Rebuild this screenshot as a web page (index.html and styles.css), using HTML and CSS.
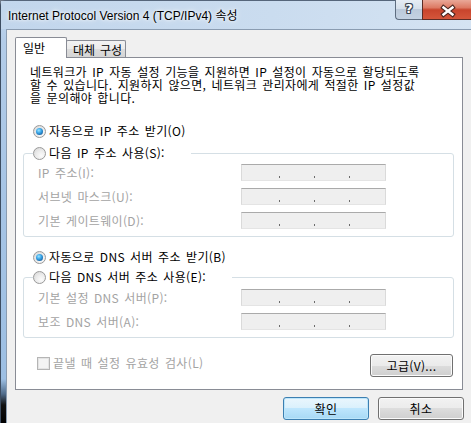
FILE: index.html
```html
<!DOCTYPE html>
<html lang="ko">
<head>
<meta charset="utf-8">
<title>Internet Protocol Version 4 (TCP/IPv4) 속성</title>
<link rel="stylesheet" href="styles.css">
</head>
<body>
<div class="window">
  <div class="titlebar">
    <span class="title">Internet Protocol Version 4 (TCP/IPv4) 속성</span>
    <div class="caption-buttons">
      <div class="cap help"><span class="help-glyph">?</span></div>
      <div class="cap close">
        <svg width="50" height="20" viewBox="0 0 50 20">
          <path d="M20.5 7.5 L29.5 14.5 M29.5 7.5 L20.5 14.5" stroke="#4a2620" stroke-width="4.6" stroke-linecap="square" fill="none"/>
          <path d="M20.5 7.5 L29.5 14.5 M29.5 7.5 L20.5 14.5" stroke="#ffffff" stroke-width="2.4" stroke-linecap="square" fill="none"/>
        </svg>
      </div>
    </div>
  </div>
  <div class="client">
    <div class="tabs">
      <div class="tab active">일반</div>
      <div class="tab">대체 구성</div>
    </div>
    <div class="panel">
      <p class="intro"><span>네트워크가 IP 자동 설정 기능을 지원하면 IP 설정이 자동으로 할당되도록</span><span>할 수 있습니다. 지원하지 않으면, 네트워크 관리자에게 적절한 IP 설정값</span><span>을 문의해야 합니다.</span></p>

      <div class="radio-row first"><span class="radio checked"></span><span>자동으로 IP 주소 받기(O)</span></div>

      <fieldset class="group g-ip">
        <legend><span class="legend-row"><span class="radio"></span><span>다음 IP 주소 사용(S):</span></span></legend>
        <div class="fields">
          <span class="flabel">IP 주소(I):</span>
          <span class="ipbox"><i></i><i></i><i></i></span>
          <span class="flabel">서브넷 마스크(U):</span>
          <span class="ipbox"><i></i><i></i><i></i></span>
          <span class="flabel">기본 게이트웨이(D):</span>
          <span class="ipbox"><i></i><i></i><i></i></span>
        </div>
      </fieldset>

      <div class="radio-row dns"><span class="radio checked"></span><span>자동으로 DNS 서버 주소 받기(B)</span></div>

      <fieldset class="group g-dns">
        <legend><span class="legend-row"><span class="radio"></span><span>다음 DNS 서버 주소 사용(E):</span></span></legend>
        <div class="fields">
          <span class="flabel">기본 설정 DNS 서버(P):</span>
          <span class="ipbox"><i></i><i></i><i></i></span>
          <span class="flabel">보조 DNS 서버(A):</span>
          <span class="ipbox"><i></i><i></i><i></i></span>
        </div>
      </fieldset>

      <div class="bottom-row">
        <div class="check"><span class="checkbox"></span><span>끝낼 때 설정 유효성 검사(L)</span></div>
        <div class="btn advanced">고급(V)...</div>
      </div>
    </div>
    <div class="dialog-buttons">
      <div class="btn default">확인</div>
      <div class="btn">취소</div>
    </div>
  </div>
</div>
</body>
</html>
```

FILE: styles.css
```css
* { box-sizing: border-box; }

html, body {
  margin: 0;
  padding: 0;
  width: 471px;
  height: 423px;
  overflow: hidden;
}

body {
  background: #6e7888;
  font-family: "Noto Sans CJK KR", "Noto Sans", sans-serif;
  font-size: 12px;
  color: #000;
}

.window {
  width: 496px;
  height: 423px;
  display: flex;
  flex-direction: column;
  border-left: 1px solid #3d4d61;
  border-top: 1px solid #56667b;
  border-top-left-radius: 6px;
  background: linear-gradient(to bottom, #c4d8ee 0px, #b3cce8 40px, #a6c4e5 200px, #9dbfe3 378px, #4f6b8a 393px, #121212 404px, #000 423px);
}

/* ---------- title bar ---------- */
.titlebar {
  height: 28px;
  flex: none;
  display: flex;
  align-items: flex-start;
  background: linear-gradient(to right, #c2d6ec 0%, #cadcef 55%, #d6e4f3 100%);
}

.title {
  font-family: "Liberation Sans", "Noto Sans CJK KR", sans-serif;
  font-size: 12px;
  line-height: 14px;
  padding: 8px 0 0 7px;
  color: #000;
  text-shadow: 0 0 6px #ffffff, 0 0 3px #ffffff;
  white-space: nowrap;
}

.caption-buttons {
  margin-left: auto;
  margin-top: -1px;
  display: flex;
  margin-right: 24px;
}

.cap {
  height: 20px;
  border: 1px solid #5e6d80;
  border-top: none;
}

.help {
  width: 27px;
  border-right: none;
  border-bottom-left-radius: 4px;
  background: linear-gradient(to bottom, #e6edf5 0%, #d6e0eb 45%, #bccadb 50%, #c4d2e2 100%);
  display: flex;
  justify-content: center;
}

.help-glyph {
  font-family: "DejaVu Sans", sans-serif;
  font-weight: bold;
  font-size: 13px;
  line-height: 18px;
  color: #fff;
  text-shadow: 1px 0 0 #3b4654, -1px 0 0 #3b4654, 0 1px 0 #3b4654, 0 -1px 0 #3b4654, 1px 1px 0 #3b4654, -1px -1px 0 #3b4654, 1px -1px 0 #3b4654, -1px 1px 0 #3b4654;
}

.close {
  width: 50px;
  border-color: #5b2c25;
  background: linear-gradient(to bottom, #e9a898 0%, #dd7a64 40%, #c8442c 52%, #d4563b 100%);
}

.close svg { display: block; }

/* ---------- client ---------- */
.client {
  flex: 1;
  margin-left: 5px;
  border-left: 1px solid #8a9cb1;
  border-top: 1px solid #8a9cb1;
  background: #f0f0f0;
  padding-top: 7px;
  letter-spacing: 0.35px;
  word-spacing: 1.5px;
}

.tabs {
  display: flex;
  align-items: flex-start;
  margin-left: 8px;
  margin-bottom: -1px;
  height: 21px;
  position: relative;
  z-index: 1;
}

.tab {
  border: 1px solid #898c95;
  border-bottom: none;
  line-height: 14px;
  white-space: nowrap;
  letter-spacing: 0;
}

.tab.active {
  width: 52px;
  height: 21px;
  padding: 3px 0 0 7px;
  background: #fff;
  border-radius: 2px 2px 0 0;
  position: relative;
  z-index: 2;
}

.tab:not(.active) {
  width: 60px;
  height: 17px;
  margin-top: 3px;
  margin-left: -1px;
  padding: 2px 0 0 6px;
  background: linear-gradient(to bottom, #f3f3f3 0%, #ebebeb 50%, #dddddd 50%, #d5d5d5 100%);
  border-radius: 2px 2px 0 0;
}

.panel {
  margin-left: 8px;
  width: 448px;
  border: 1px solid #898c95;
  background: #fff;
  padding-bottom: 12px;
}

.intro {
  margin: 7px 0 0 14px;
  white-space: nowrap;
}

.intro span {
  display: block;
  height: 13px;
  line-height: 13px;
}

.radio-row, .legend-row {
  display: flex;
  align-items: center;
  gap: 3px;
  height: 14px;
  line-height: 14px;
  white-space: nowrap;
}

.radio-row { margin-left: 17px; }
.radio-row.first { margin-top: 20px; }
.radio-row.dns { margin-top: 13px; }

.radio {
  width: 13px;
  height: 13px;
  flex: none;
  border-radius: 50%;
  border: 1px solid #9a9a9a;
  background: radial-gradient(circle at 65% 70%, #fbfbfb 0%, #ececec 45%, #d4d4d4 100%);
  position: relative;
}

.radio.checked::after {
  content: "";
  position: absolute;
  left: 2px;
  top: 2px;
  width: 7px;
  height: 7px;
  border-radius: 50%;
  background: radial-gradient(circle at 40% 35%, #9be4ff 0%, #3aa6e8 40%, #1b69aa 75%, #173f63 100%);
}

.group {
  margin: 8px 8px 0 7px;
  padding: 4px 0 7px 0;
  border: 1px solid #d5dfe5;
  border-radius: 3px;
  min-width: 0;
}

.group legend {
  padding: 0 26px 0 0;
  margin-left: 9px;
}

.g-dns { margin-top: 6px; padding-top: 5px; }

.fields {
  display: grid;
  grid-template-columns: 203px 145px;
  row-gap: 7px;
  margin-left: 14px;
  align-items: center;
}

.flabel {
  color: #a3a3a3;
  line-height: 14px;
  white-space: nowrap;
}

.ipbox {
  display: flex;
  align-items: flex-end;
  gap: 34px;
  height: 17px;
  width: 145px;
  padding: 0 0 2px 37px;
  background: #efefef;
  border-top: 1px solid #aaaaaa;
  border-left: 1px solid #dadada;
  border-right: 1px solid #dadada;
  border-bottom: 1px solid #e4e4e4;
}

.ipbox i {
  display: block;
  width: 1px;
  height: 2px;
  background: #6b6b6b;
}

.bottom-row {
  display: flex;
  justify-content: space-between;
  align-items: flex-start;
  margin: 16px 9px 0 21px;
}

.check {
  display: flex;
  align-items: center;
  gap: 3px;
  margin-top: 2px;
  line-height: 14px;
  color: #a3a3a3;
}

.checkbox {
  width: 13px;
  height: 13px;
  flex: none;
  border: 1px solid #b5b5b5;
  background: #f4f4f4;
  box-shadow: inset 0 0 0 1px #e4e4e4;
}

.btn {
  height: 23px;
  display: flex;
  align-items: center;
  justify-content: center;
  border: 1px solid #707070;
  border-radius: 3px;
  background: linear-gradient(to bottom, #f2f2f2 0%, #ebebeb 50%, #dddddd 50%, #cfcfcf 100%);
  box-shadow: inset 0 0 0 1px #fbfbfb;
  line-height: 14px;
  white-space: nowrap;
}

.btn.advanced { width: 83px; }

.dialog-buttons {
  display: flex;
  justify-content: flex-end;
  gap: 9px;
  margin: 7px 0 0 8px;
  width: 449px;
}

.dialog-buttons .btn { width: 86px; }

.btn.default {
  border-color: #3c7fb1;
  background: linear-gradient(to bottom, #eaf6fd 0%, #d9f0fc 50%, #bee6fd 50%, #a7d9f5 100%);
  box-shadow: inset 0 0 0 1px #bde6fb;
}
```
